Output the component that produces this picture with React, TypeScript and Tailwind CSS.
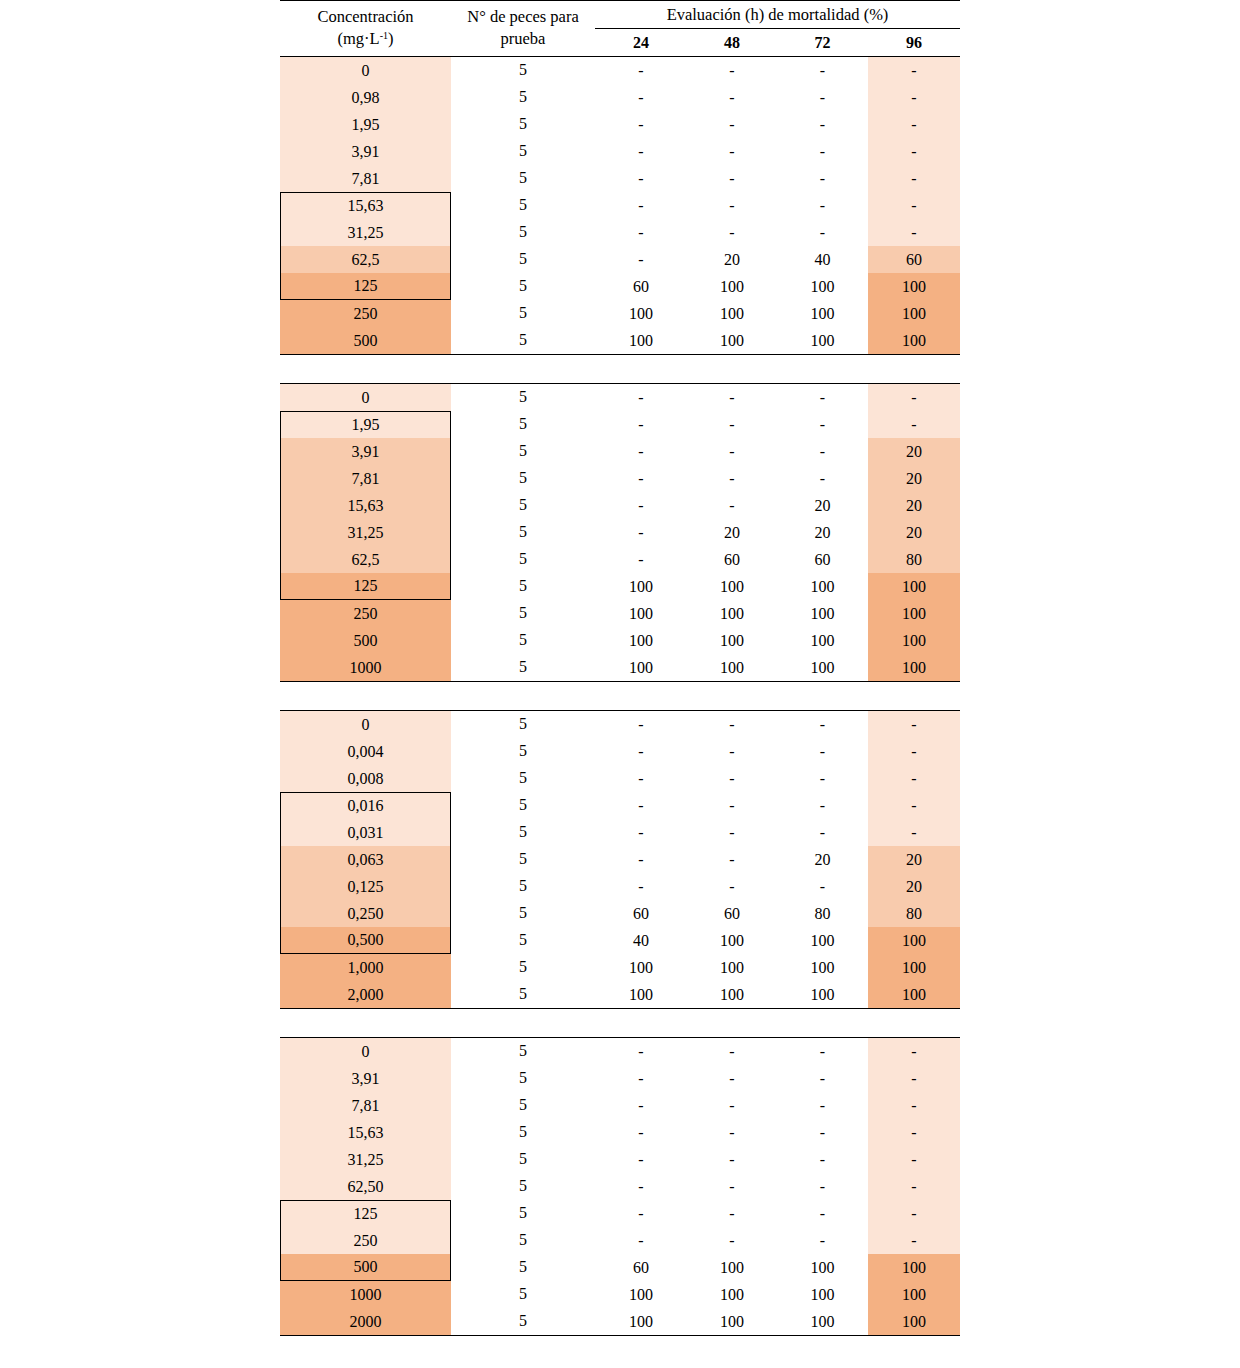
type Tone = "l" | "m" | "d";

type Row = {
  c: string;
  tone: Tone;
  v: string[];
  vTone: Tone;
};

type Block = {
  rows: Row[];
  box: [number, number];
};

const toneBg: Record<Tone, string> = {
  l: "bg-[#fce4d6]",
  m: "bg-[#f8cbad]",
  d: "bg-[#f4b183]",
};

const dash = ["-", "-", "-", "-"];
const full = ["100", "100", "100", "100"];

const blocks: Block[] = [
  {
    box: [5, 8],
    rows: [
      { c: "0", tone: "l", v: dash, vTone: "l" },
      { c: "0,98", tone: "l", v: dash, vTone: "l" },
      { c: "1,95", tone: "l", v: dash, vTone: "l" },
      { c: "3,91", tone: "l", v: dash, vTone: "l" },
      { c: "7,81", tone: "l", v: dash, vTone: "l" },
      { c: "15,63", tone: "l", v: dash, vTone: "l" },
      { c: "31,25", tone: "l", v: dash, vTone: "l" },
      { c: "62,5", tone: "m", v: ["-", "20", "40", "60"], vTone: "m" },
      { c: "125", tone: "d", v: ["60", "100", "100", "100"], vTone: "d" },
      { c: "250", tone: "d", v: full, vTone: "d" },
      { c: "500", tone: "d", v: full, vTone: "d" },
    ],
  },
  {
    box: [1, 7],
    rows: [
      { c: "0", tone: "l", v: dash, vTone: "l" },
      { c: "1,95", tone: "l", v: dash, vTone: "l" },
      { c: "3,91", tone: "m", v: ["-", "-", "-", "20"], vTone: "m" },
      { c: "7,81", tone: "m", v: ["-", "-", "-", "20"], vTone: "m" },
      { c: "15,63", tone: "m", v: ["-", "-", "20", "20"], vTone: "m" },
      { c: "31,25", tone: "m", v: ["-", "20", "20", "20"], vTone: "m" },
      { c: "62,5", tone: "m", v: ["-", "60", "60", "80"], vTone: "m" },
      { c: "125", tone: "d", v: full, vTone: "d" },
      { c: "250", tone: "d", v: full, vTone: "d" },
      { c: "500", tone: "d", v: full, vTone: "d" },
      { c: "1000", tone: "d", v: full, vTone: "d" },
    ],
  },
  {
    box: [3, 8],
    rows: [
      { c: "0", tone: "l", v: dash, vTone: "l" },
      { c: "0,004", tone: "l", v: dash, vTone: "l" },
      { c: "0,008", tone: "l", v: dash, vTone: "l" },
      { c: "0,016", tone: "l", v: dash, vTone: "l" },
      { c: "0,031", tone: "l", v: dash, vTone: "l" },
      { c: "0,063", tone: "m", v: ["-", "-", "20", "20"], vTone: "m" },
      { c: "0,125", tone: "m", v: ["-", "-", "-", "20"], vTone: "m" },
      { c: "0,250", tone: "m", v: ["60", "60", "80", "80"], vTone: "m" },
      { c: "0,500", tone: "d", v: ["40", "100", "100", "100"], vTone: "d" },
      { c: "1,000", tone: "d", v: full, vTone: "d" },
      { c: "2,000", tone: "d", v: full, vTone: "d" },
    ],
  },
  {
    box: [6, 8],
    rows: [
      { c: "0", tone: "l", v: dash, vTone: "l" },
      { c: "3,91", tone: "l", v: dash, vTone: "l" },
      { c: "7,81", tone: "l", v: dash, vTone: "l" },
      { c: "15,63", tone: "l", v: dash, vTone: "l" },
      { c: "31,25", tone: "l", v: dash, vTone: "l" },
      { c: "62,50", tone: "l", v: dash, vTone: "l" },
      { c: "125", tone: "l", v: dash, vTone: "l" },
      { c: "250", tone: "l", v: dash, vTone: "l" },
      { c: "500", tone: "d", v: ["60", "100", "100", "100"], vTone: "d" },
      { c: "1000", tone: "d", v: full, vTone: "d" },
      { c: "2000", tone: "d", v: full, vTone: "d" },
    ],
  },
];

const valWidths = ["w-[92px]", "w-[90px]", "w-[91px]", "w-[92px]"];

const DataBlock = ({ block, first }: { block: Block; first: boolean }) => {
  const [b0, b1] = block.box;
  return (
    <div className={`border-b border-black ${first ? "" : "mt-[28px] border-t"}`}>
      {block.rows.map((r, i) => {
        const inBox = i >= b0 && i <= b1;
        const boxCls = inBox
          ? `border-x border-black ${i === b0 ? "border-t" : ""} ${i === b1 ? "border-b" : ""}`
          : "";
        return (
          <div key={i} className="flex h-[27px]">
            <div
              className={`flex w-[171px] items-center justify-center ${toneBg[r.tone]} ${boxCls}`}
            >
              {r.c}
            </div>
            <div className="flex w-[144px] items-center justify-center pb-[2px]">5</div>
            {r.v.map((v, j) => (
              <div
                key={j}
                className={`flex items-center justify-center ${valWidths[j]} ${
                  j === 3 ? toneBg[r.vTone] : ""
                }`}
              >
                {v}
              </div>
            ))}
          </div>
        );
      })}
    </div>
  );
};

export default function App() {
  return (
    <div className="min-h-[1368px] bg-white font-['Liberation_Serif',serif] text-[16px] text-black">
      <div className="mx-auto w-[680px]">
        <div className="flex border-t border-black text-[16.5px]">
          <div className="flex h-[55px] w-[171px] flex-col items-center justify-center pb-[1px] leading-[22px]">
            <span>Concentración</span>
            <span>
              (mg·L<sup className="text-[10px]">-1</sup>)
            </span>
          </div>
          <div className="flex h-[55px] w-[144px] flex-col items-center justify-center pb-[1px] leading-[22px]">
            <span>N° de peces para</span>
            <span>prueba</span>
          </div>
          <div className="flex flex-1 flex-col">
            <div className="flex h-[28px] items-center justify-center border-b border-black pt-[2px]">
              Evaluación (h) de mortalidad (%)
            </div>
            <div className="flex h-[27px] text-[16px] font-bold">
              <div className="flex w-[92px] items-center justify-center">24</div>
              <div className="flex w-[90px] items-center justify-center">48</div>
              <div className="flex w-[91px] items-center justify-center">72</div>
              <div className="flex w-[92px] items-center justify-center">96</div>
            </div>
          </div>
        </div>
        <div className="border-t border-black">
          {blocks.map((b, i) => (
            <DataBlock key={i} block={b} first={i === 0} />
          ))}
        </div>
      </div>
    </div>
  );
}
